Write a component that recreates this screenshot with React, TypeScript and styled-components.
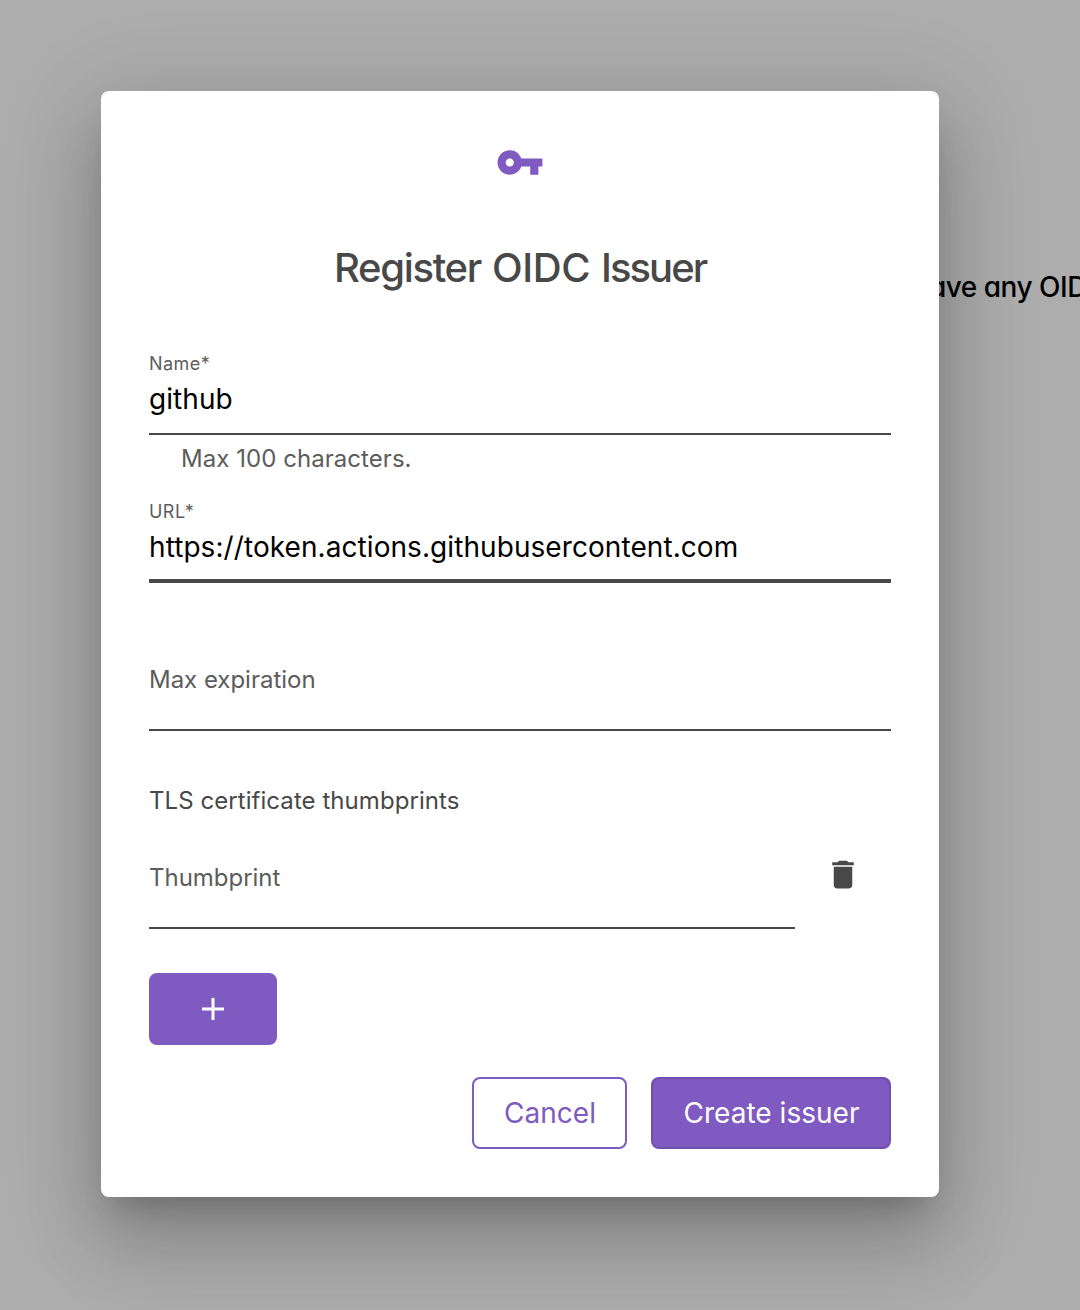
import React from "react";
import styled, { createGlobalStyle } from "styled-components";

const purple = "#7f5ac1";
const ink = "#484848";

const GlobalStyle = createGlobalStyle`
  * { box-sizing: border-box; }
  body {
    margin: 0;
    overflow: hidden;
    background: #adadad;
    font-family: Inter, "Liberation Sans", sans-serif;
  }
`;

const Page = styled.div`
  position: relative;
  display: flex;
  align-items: flex-start;
  width: 1080px;
  height: 1310px;
  padding: 91px 0 0 101px;
  overflow: hidden;
  background: #adadad;
`;

const EmptyMessage = styled.p`
  position: absolute;
  left: 929px;
  top: 270px;
  margin: 0;
  font-size: 28px;
  line-height: 34px;
  font-weight: 500;
  letter-spacing: -0.5px;
  font-feature-settings: "cv11" 1;
  white-space: nowrap;
  color: #000;
`;

const Dialog = styled.section`
  position: relative;
  display: flex;
  flex-direction: column;
  width: 838px;
  height: 1106px;
  padding: 47px 48px 48px;
  border-radius: 8px;
  background: #fff;
  box-shadow:
    0 22px 30px -14px rgba(0, 0, 0, 0.2),
    0 48px 76px 6px rgba(0, 0, 0, 0.14),
    0 18px 92px 16px rgba(0, 0, 0, 0.12);
`;

const KeyIcon = styled.svg`
  display: block;
  align-self: center;
  width: 50px;
  height: 49px;
  fill: ${purple};
`;

const Title = styled.h1`
  display: flex;
  justify-content: center;
  gap: 11px;
  margin: 57px 0 0;
  height: 48px;
  font-size: 40px;
  line-height: 48px;
  font-weight: 500;
  white-space: nowrap;
  color: ${ink};
`;

const TitleWord = styled.span<{ $spacing: number }>`
  letter-spacing: ${(p) => p.$spacing}px;
`;

const Field = styled.div<{ $line?: number; $height?: number; $top?: number }>`
  display: flex;
  flex-direction: column;
  flex: none;
  height: ${(p) => p.$height ?? 84}px;
  margin-top: ${(p) => p.$top ?? 0}px;
  border-bottom: ${(p) => p.$line ?? 2}px solid ${ink};
`;

const FloatingLabel = styled.label`
  padding-top: 1px;
  font-size: 18px;
  line-height: 24px;
  letter-spacing: 0.45px;
  color: #5c5c5c;
`;

const Value = styled.div`
  margin-top: 6px;
  font-size: 28px;
  line-height: 34px;
  letter-spacing: 0.07px;
  white-space: nowrap;
  color: #000;
`;

const Placeholder = styled.label`
  padding-top: 1px;
  font-size: 24px;
  line-height: 30px;
  letter-spacing: -0.02px;
  color: #5c5c5c;
`;

const Helper = styled.p`
  margin: 9px 0 0 32px;
  height: 30px;
  font-size: 24px;
  line-height: 30px;
  letter-spacing: 0.05px;
  color: #5c5c5c;
`;

const GroupLabel = styled.h2`
  margin: 55px 0 0;
  height: 30px;
  font-size: 24px;
  line-height: 30px;
  font-weight: 400;
  letter-spacing: 0.06px;
  color: ${ink};
`;

const ThumbprintRow = styled.div`
  display: grid;
  grid-template-columns: 646px 96px;
  height: 67px;
  margin-top: 46px;
`;

const IconButton = styled.button`
  display: flex;
  justify-content: center;
  align-items: flex-start;
  height: 37px;
  margin-top: -6px;
  padding: 0;
  border: 0;
  background: none;
`;

const TrashIcon = styled.svg`
  width: 38px;
  height: 37px;
  fill: ${ink};
`;

const Button = styled.button<{ $width: number; $variant: "outlined" | "raised" | "plain" }>`
  display: flex;
  align-items: center;
  justify-content: center;
  flex: none;
  width: ${(p) => p.$width}px;
  height: 72px;
  padding: 0 0 0 1px;
  border: 2px solid ${(p) => (p.$variant === "raised" ? "#724fae" : purple)};
  border-radius: 8px;
  background: ${(p) => (p.$variant === "outlined" ? "#fff" : purple)};
  color: ${(p) => (p.$variant === "outlined" ? purple : "#fff")};
  font-family: inherit;
  font-size: 28px;
  line-height: 34px;
  font-weight: 400;
  letter-spacing: 0.03px;
  white-space: nowrap;
`;

const AddRow = styled.div`
  display: flex;
  margin-top: 44px;
`;

const PlusIcon = styled.svg`
  width: 23px;
  height: 22px;
  stroke: #fff;
  stroke-width: 3;
`;

const Actions = styled.div`
  display: flex;
  justify-content: flex-end;
  gap: 24px;
  margin-top: 32px;
`;

export default function App() {
  return (
    <Page>
      <GlobalStyle />
      <EmptyMessage>ave any OID</EmptyMessage>
      <Dialog role="dialog">
        <KeyIcon viewBox="0 0 24 24">
          <path d="M12.65 10C11.83 7.67 9.61 6 7 6c-3.31 0-6 2.69-6 6s2.69 6 6 6c2.61 0 4.83-1.67 5.65-4H17v4h4v-4h2v-4H12.65zM7 14c-1.1 0-2-.9-2-2s.9-2 2-2 2 .9 2 2-.9 2-2 2z" />
        </KeyIcon>
        <Title>
          <TitleWord $spacing={-1.3}>Register</TitleWord>
          <TitleWord $spacing={-0.4}>OIDC</TitleWord>
          <TitleWord $spacing={-2}>Issuer</TitleWord>
        </Title>
        <Field $top={59}>
          <FloatingLabel>Name*</FloatingLabel>
          <Value>github</Value>
        </Field>
        <Helper>Max 100 characters.</Helper>
        <Field $top={25} $line={4}>
          <FloatingLabel>URL*</FloatingLabel>
          <Value>https://token.actions.githubusercontent.com</Value>
        </Field>
        <Field $top={81} $height={67}>
          <Placeholder>Max expiration</Placeholder>
        </Field>
        <GroupLabel>TLS certificate thumbprints</GroupLabel>
        <ThumbprintRow>
          <Field $height={67}>
            <Placeholder>Thumbprint</Placeholder>
          </Field>
          <IconButton aria-label="Remove">
            <TrashIcon viewBox="0 0 24 24">
              <path d="M6 19c0 1.1.9 2 2 2h8c1.1 0 2-.9 2-2V7H6v12zM19 4h-3.5l-1-1h-5l-1 1H5v2h14V4z" />
            </TrashIcon>
          </IconButton>
        </ThumbprintRow>
        <AddRow>
          <Button $width={128} $variant="plain" aria-label="Add">
            <PlusIcon viewBox="0 0 23 22">
              <path d="M11 0v22M0 11h22" />
            </PlusIcon>
          </Button>
        </AddRow>
        <Actions>
          <Button $width={155} $variant="outlined">Cancel</Button>
          <Button $width={240} $variant="raised">Create issuer</Button>
        </Actions>
      </Dialog>
    </Page>
  );
}
